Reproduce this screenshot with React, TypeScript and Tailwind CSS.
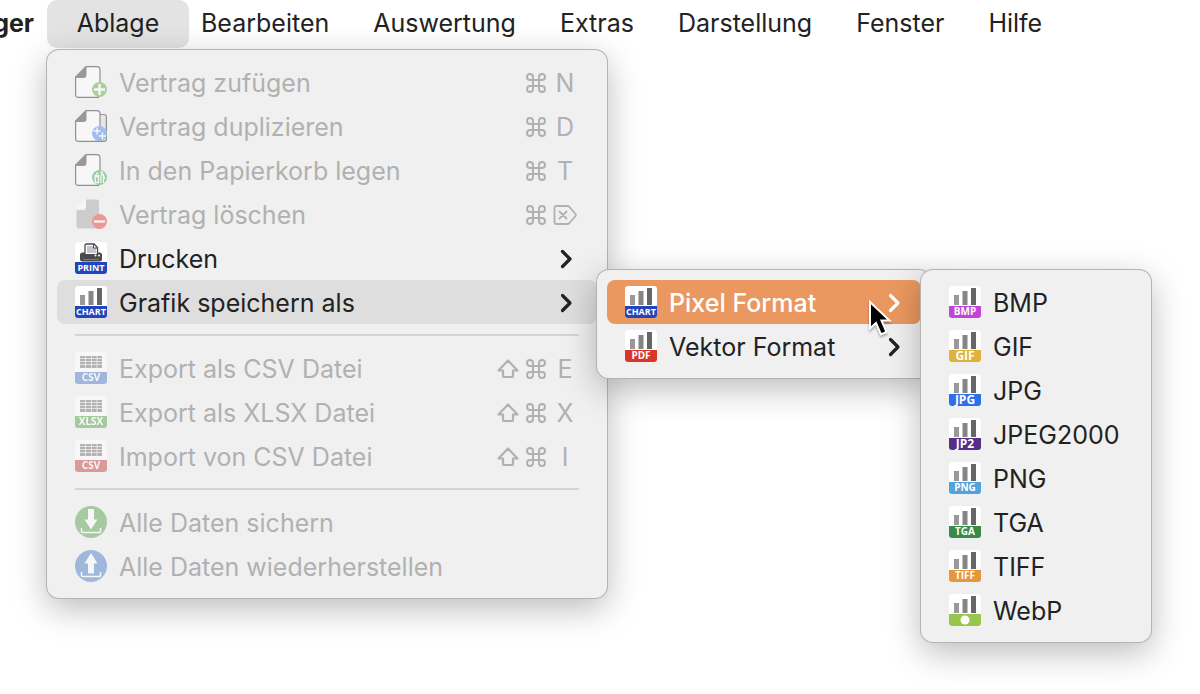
import type { ReactNode } from "react";

function FormatIcon({ label, color, art = "bars", large = false }: { label: string; color: string; art?: "bars" | "table" | "printer"; large?: boolean }) {
  const size = large ? 12 : label.length > 4 ? 9 : 10;
  return (
    <svg viewBox="0 0 32 32" className="size-8 shrink-0 overflow-visible" aria-hidden="true">
      <rect width="32" height="32" rx="3" fill="#fff" />
      {art === "bars" && (
        <>
          <rect x="5" y="9" width="5" height="10" fill="#999" />
          <rect x="13.500" y="5" width="5" height="14" fill="#858585" />
          <rect x="22" y="2" width="5" height="17" fill="#666" />
        </>
      )}
      {art === "table" && (
        <>
          <rect x="5" y="4" width="22" height="12" fill="#757575" />
          <path d="M5 6.500h22M5 9.500h22M5 12.500h22M10.500 4v12M16.500 4v12M22 4v12" stroke="#fff" strokeWidth=".7" />
        </>
      )}
      {art === "printer" && (
        <>
          <rect x="5" y="10.500" width="22" height="9" rx="2.500" fill="#4a4a4a" />
          <path d="M10 12V3.500Q10 2 11.500 2h7.500l3.500 3.500V12" fill="#fff" stroke="#4a4a4a" strokeWidth="1.300" />
          <path d="M12 4h6v2h3v5h-9z" fill="#c5c5d2" />
          <path d="M18.500 2v4h4" fill="none" stroke="#4a4a4a" />
          <path d="M8.500 17.500h15" stroke="#8a8a8a" strokeWidth=".8" />
          <circle cx="20.500" cy="13.500" r="1" fill="#fff" />
          <circle cx="24" cy="13.500" r="1" fill="#fff" />
        </>
      )}
      <path d="M0 20h32v9a3 3 0 0 1-3 3H3a3 3 0 0 1-3-3z" fill={color} />
      {label ? (
        <text x="16" y={large ? 30 : 29} textAnchor="middle" fontSize={size} fontWeight="700" fill="#fff" fontFamily='"Open Sans", "Noto Sans", sans-serif'>
          {label}
        </text>
      ) : (
        <circle cx="16" cy="26" r="4.500" fill="#fff" />
      )}
    </svg>
  );
}

function DocumentIcon({ badge }: { badge: "add" | "duplicate" | "trash" }) {
  return (
    <svg viewBox="0 0 32 32" className="size-8 shrink-0" aria-hidden="true">
      {badge === "duplicate" && <path d="M23 4.500h6q2.400 0 2.400 2.400v22q0 2.400-2.400 2.400H20" fill="#ddd" stroke="#333" strokeWidth="1.200" />}
      <path d="M11 .600H22q3 0 3 3v24.800q0 3-3 3H3.600q-3 0-3-3V11z" fill="#fff" stroke="#333" strokeWidth="1.200" />
      <path d="M11 .600L.600 11v1H8.500q3 0 3-3V.600z" fill="#444" />
      {badge === "duplicate" && <path d="M20 31.400h9" stroke="#333" strokeWidth="1.200" />}
      {badge === "add" && (
        <>
          <circle cx="24.500" cy="23.500" r="7.500" fill="#65b145" />
          <path d="M24.500 18v11M19 23.500h11" stroke="#fff" strokeWidth="2.400" />
        </>
      )}
      {badge === "duplicate" && (
        <>
          <circle cx="24.500" cy="23.500" r="7.500" fill="#528cf0" />
          <path d="M22 17.500v7M18.500 21h7M27.500 22.500v7M24 26h7" stroke="#fff" strokeWidth="1.400" />
        </>
      )}
      {badge === "trash" && (
        <>
          <circle cx="24.500" cy="23.500" r="7.500" fill="#49aa58" />
          <path d="M20 22.500h3.500v6h-3zM19.500 21.500h4.500M26 20.500h2.500v8.500M26 21v8M28.500 22.500l1.500 2M21 19.500h2" fill="none" stroke="#fff" strokeWidth="1.300" />
          <circle cx="26.700" cy="18.500" r="1.200" fill="#fff" />
        </>
      )}
    </svg>
  );
}

function DeleteDocumentIcon() {
  return (
    <svg viewBox="0 0 32 32" className="size-8 shrink-0" aria-hidden="true">
      <path d="M11 1.500h10.500q2.500 0 2.500 2.500v26.500H3.500q-2 0-2-2V12H9q2 0 2-2z" fill="#ababab" />
      <path d="M1.500 10.500l9-9v7q0 2-2 2z" fill="#fff" />
      <circle cx="24.500" cy="23.500" r="7.500" fill="#e8403f" />
      <path d="M19 23.500h11" stroke="#fff" strokeWidth="2.200" />
    </svg>
  );
}

function TransferIcon({ up = false }: { up?: boolean }) {
  return (
    <svg viewBox="0 0 32 32" className="size-8 shrink-0" aria-hidden="true">
      <circle cx="16" cy="16" r="16" fill={up ? "#5280cc" : "#5ca552"} />
      <path d={up ? "M16 3l6.500 10.500H19V23.500h-6V13.500H9.500z" : "M13 3h6v10.500h3.500L16 23.500 9.500 13.500H13z"} fill="#fff" />
      <path d="M6.500 22v3.500q0 1 1 1h17q1 0 1-1V22" fill="none" stroke="#fff" strokeWidth="1.500" />
    </svg>
  );
}

function Chevron() {
  return (
    <svg viewBox="0 0 24 24" className="size-6 shrink-0" aria-hidden="true">
      <path d="M9.500 4.500L17 12l-7.500 7.500" fill="none" stroke="currentColor" strokeWidth="3.200" strokeLinecap="round" strokeLinejoin="round" />
    </svg>
  );
}

function CommandKey() {
  return (
    <svg viewBox="0 0 20 20" className="size-5" role="img" aria-label="Befehlstaste">
      <path d="M7 7V4a3 3 0 1 0-3 3h12a3 3 0 1 0-3-3v12a3 3 0 1 0 3-3H4a3 3 0 1 0 3 3z" fill="none" stroke="currentColor" strokeWidth="2" />
    </svg>
  );
}

function ShiftKey() {
  return (
    <svg viewBox="0 0 22 20" className="h-5 w-[22px]" role="img" aria-label="Umschalttaste">
      <path d="M11 1.500L20.500 11.500H16v5q0 1.500-1.500 1.500h-7Q6 18 6 16.500v-5H1.500z" fill="none" stroke="currentColor" strokeWidth="2.200" strokeLinejoin="round" />
    </svg>
  );
}

function ForwardDeleteKey() {
  return (
    <svg viewBox="0 0 24 20" className="h-5 w-6" role="img" aria-label="Entfernen">
      <path d="M3.500 1h11q1 0 2 1l6 7q.7 1 0 2l-6 7q-1 1-2 1h-11q-2 0-2-2V3q0-2 2-2z" fill="none" stroke="currentColor" strokeWidth="1.800" />
      <path d="M6.500 6.500l7 7M13.500 6.500l-7 7" stroke="currentColor" strokeWidth="1.800" strokeLinecap="round" />
    </svg>
  );
}

function Shortcut({ shift = false, children }: { shift?: boolean; children: ReactNode }) {
  return (
    <span className="flex items-center gap-[7px]">
      {shift && <ShiftKey />}
      <CommandKey />
      <span className="flex w-6 justify-center">{children}</span>
    </span>
  );
}

type ItemProps = {
  icon: ReactNode;
  label: string;
  disabled?: boolean;
  state?: "open" | "active";
  nested?: boolean;
  trailing?: ReactNode;
  submenu?: ReactNode;
};

function Item({ icon, label, disabled = false, state, nested = false, trailing, submenu }: ItemProps) {
  const tone =
    state === "active"
      ? "bg-[#ea9860] font-medium text-white"
      : state === "open"
        ? "bg-[#dedede] text-[#222]"
        : disabled
          ? "text-[#b1b1b1]"
          : "text-[#222]";
  return (
    <li role="none" className="relative">
      <button
        type="button"
        role="menuitem"
        disabled={disabled}
        aria-expanded={submenu ? true : undefined}
        className={`flex h-11 w-full items-center gap-3 rounded-[8px] pl-[18px] text-left whitespace-nowrap ${nested ? "pr-4" : "pr-5"} ${tone}`}
      >
        <span className={disabled ? "opacity-50" : ""}>{icon}</span>
        <span className="flex grow items-center justify-between pt-[2px]">
          <span>{label}</span>
          {trailing}
        </span>
      </button>
      {submenu}
    </li>
  );
}

function Separator() {
  return (
    <li role="separator" className="flex h-[22px] items-center px-[18px]">
      <span className="h-[2px] grow bg-[#d4d4d4]" />
    </li>
  );
}

function Menu({ label, className, children }: { label: string; className: string; children: ReactNode }) {
  return (
    <ul role="menu" aria-label={label} className={`absolute rounded-[12px] bg-[#f0f0f0] p-[10px] shadow-[0_0_0_1px_#b3b3b3,0_10px_34px_rgba(0,0,0,0.28)] ${className}`}>
      {children}
    </ul>
  );
}

const pixelFormats = [
  { name: "BMP", badge: "BMP", color: "#c044d6" },
  { name: "GIF", badge: "GIF", color: "#dfb23b", large: true },
  { name: "JPG", badge: "JPG", color: "#2f70ea", large: true },
  { name: "JPEG2000", badge: "JP2", color: "#552e85", large: true },
  { name: "PNG", badge: "PNG", color: "#50a3dc" },
  { name: "TGA", badge: "TGA", color: "#388c49" },
  { name: "TIFF", badge: "TIFF", color: "#e8963c" },
  { name: "WebP", badge: "", color: "#96c64e" },
];

function Pointer() {
  return (
    <svg viewBox="0 0 26 40" className="pointer-events-none absolute top-5 right-7 z-20 h-10 w-[26px] drop-shadow-[0_2px_1px_rgba(0,0,0,0.3)]" aria-hidden="true">
      <path d="M3 2v26.500l6-5.500 5 11.500 5.500-2.500-5-11.500h8z" fill="#000" stroke="#fff" strokeWidth="2" />
    </svg>
  );
}

function PixelMenu() {
  return (
    <>
      <Menu label="Pixel Format" className="-top-[10px] left-full z-10 w-[230px] font-normal">
        {pixelFormats.map((f) => (
          <Item key={f.name} label={f.name} icon={<FormatIcon label={f.badge} color={f.color} large={f.large} />} />
        ))}
      </Menu>
      <Pointer />
    </>
  );
}

function ChartMenu() {
  return (
    <Menu label="Grafik speichern als" className="-top-[10px] left-full w-[334px]">
      <Item nested label="Pixel Format" state="active" icon={<FormatIcon label="CHART" color="#2244bd" />} trailing={<Chevron />} submenu={<PixelMenu />} />
      <Item nested label="Vektor Format" icon={<FormatIcon label="PDF" color="#d83728" />} trailing={<Chevron />} />
    </Menu>
  );
}

function FileMenu() {
  return (
    <Menu label="Ablage" className="top-[50px] left-0 w-[560px]">
      <Item disabled label="Vertrag zufügen" icon={<DocumentIcon badge="add" />} trailing={<Shortcut>N</Shortcut>} />
      <Item disabled label="Vertrag duplizieren" icon={<DocumentIcon badge="duplicate" />} trailing={<Shortcut>D</Shortcut>} />
      <Item disabled label="In den Papierkorb legen" icon={<DocumentIcon badge="trash" />} trailing={<Shortcut>T</Shortcut>} />
      <Item disabled label="Vertrag löschen" icon={<DeleteDocumentIcon />} trailing={<Shortcut><ForwardDeleteKey /></Shortcut>} />
      <Item label="Drucken" icon={<FormatIcon label="PRINT" color="#2244bd" art="printer" />} trailing={<Chevron />} />
      <Item label="Grafik speichern als" state="open" icon={<FormatIcon label="CHART" color="#2244bd" />} trailing={<Chevron />} submenu={<ChartMenu />} />
      <Separator />
      <Item disabled label="Export als CSV Datei" icon={<FormatIcon label="CSV" color="#5280cc" art="table" />} trailing={<Shortcut shift>E</Shortcut>} />
      <Item disabled label="Export als XLSX Datei" icon={<FormatIcon label="XLSX" color="#5ca552" art="table" />} trailing={<Shortcut shift>X</Shortcut>} />
      <Item disabled label="Import von CSV Datei" icon={<FormatIcon label="CSV" color="#ca4545" art="table" />} trailing={<Shortcut shift>I</Shortcut>} />
      <Separator />
      <Item disabled label="Alle Daten sichern" icon={<TransferIcon />} />
      <Item disabled label="Alle Daten wiederherstellen" icon={<TransferIcon up />} />
    </Menu>
  );
}

export default function App() {
  return (
    <div className="min-h-screen overflow-hidden bg-white font-['Inter','Liberation_Sans',sans-serif] text-[25px] leading-8 text-[#222]">
      <nav aria-label="Menüleiste" className="flex h-12 items-center whitespace-nowrap">
        <strong className="flex w-[34px] shrink-0 justify-end pb-[2px] font-bold">ger</strong>
        <div className="relative ml-[13px]">
          <button type="button" aria-expanded="true" className="flex h-12 w-[142px] items-center justify-center rounded-[10px] bg-[#e3e3e3] pb-[2px]">
            Ablage
          </button>
          <FileMenu />
        </div>
        <div className="flex gap-11 pb-[2px] pl-3">
          {["Bearbeiten", "Auswertung", "Extras", "Darstellung", "Fenster", "Hilfe"].map((name) => (
            <button key={name} type="button">
              {name}
            </button>
          ))}
        </div>
      </nav>
    </div>
  );
}
